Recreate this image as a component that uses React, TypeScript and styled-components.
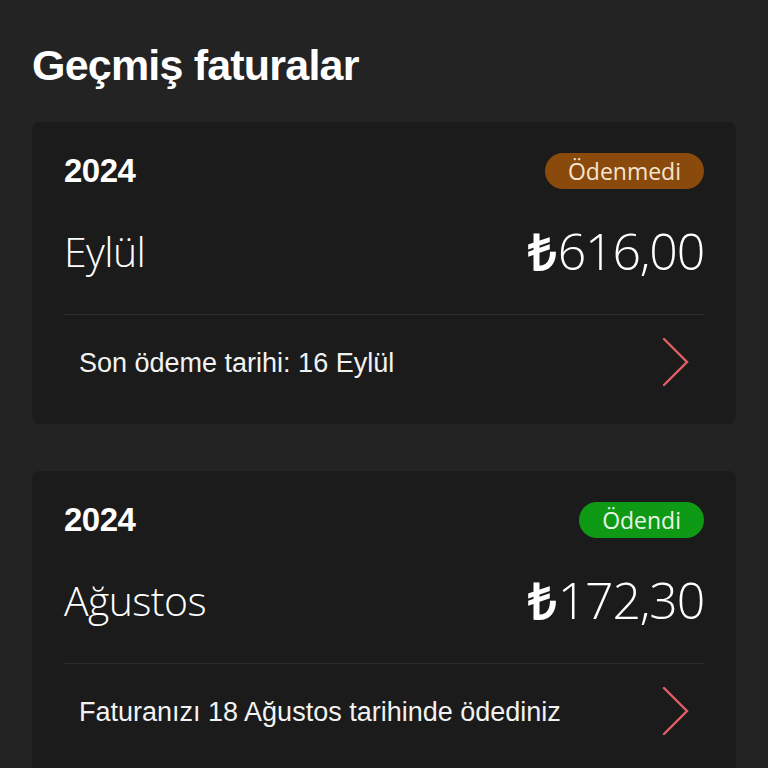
import styled, { createGlobalStyle } from 'styled-components';

const GlobalStyle = createGlobalStyle`
  html, body {
    margin: 0;
    padding: 0;
    background: #232323;
  }
  body {
    font-family: "Liberation Sans", sans-serif;
    color: #ffffff;
  }
`;

const Page = styled.div`
  width: 768px;
  height: 768px;
  overflow: hidden;
  box-sizing: border-box;
  padding: 39px 32px 0;
  background: #232323;
`;

const Title = styled.h1`
  margin: 0 0 31px;
  font-family: "Liberation Sans", sans-serif;
  font-size: 43px;
  font-weight: 700;
  line-height: 52px;
  letter-spacing: -0.8px;
  color: #ffffff;
`;

const List = styled.div`
  display: flex;
  flex-direction: column;
  gap: 47px;
`;

const Card = styled.div`
  background: #1b1b1b;
  border-radius: 8px;
  padding: 31px 32px 0;
`;

const TopRow = styled.div`
  display: flex;
  justify-content: space-between;
  align-items: center;
  height: 36px;
`;

const Year = styled.span`
  font-family: "Liberation Sans", sans-serif;
  font-size: 33px;
  font-weight: 700;
  letter-spacing: -0.5px;
`;

const Badge = styled.span<{ $tone: 'unpaid' | 'paid' }>`
  display: inline-flex;
  align-items: center;
  height: 36px;
  padding: 0 23px;
  border-radius: 18px;
  background: ${({ $tone }) => ($tone === 'paid' ? '#0f9a15' : '#8a4a0b')};
  color: ${({ $tone }) => ($tone === 'paid' ? '#e6f5e6' : '#f4e4d2')};
  font-family: "Open Sans", sans-serif;
  font-size: 23px;
`;

const MainRow = styled.div`
  display: flex;
  justify-content: space-between;
  align-items: center;
  height: 88px;
  margin-top: 18px;
  border-bottom: 1px solid #2e2e2e;
  padding-bottom: 19px;
`;

const Month = styled.span`
  font-family: "Open Sans", sans-serif;
  font-weight: 300;
  font-size: 41px;
  letter-spacing: -0.6px;
`;

const Amount = styled.span`
  font-family: "Open Sans", sans-serif;
  font-weight: 300;
  font-size: 50px;
  letter-spacing: -1.2px;
`;

const Lira = styled.span`
  font-weight: 700;
  margin-right: 2px;
`;

const FooterRow = styled.div`
  display: flex;
  justify-content: space-between;
  align-items: center;
  height: 96px;
  padding: 0 14px 0 15px;
  margin-bottom: 13px;
`;

const Note = styled.span`
  font-size: 27px;
  letter-spacing: 0;
  color: #f2f2f2;
`;

const Chevron = () => (
  <svg width="30" height="50" viewBox="0 0 30 50" fill="none">
    <path d="M4 1 L27 24 L4 47" stroke="#e35f66" strokeWidth="2.4" strokeLinecap="round" strokeLinejoin="miter" />
  </svg>
);

const bills = [
  {
    year: '2024',
    month: 'Eylül',
    amount: '616,00',
    status: 'unpaid' as const,
    label: 'Ödenmedi',
    note: 'Son ödeme tarihi: 16 Eylül',
  },
  {
    year: '2024',
    month: 'Ağustos',
    amount: '172,30',
    status: 'paid' as const,
    label: 'Ödendi',
    note: 'Faturanızı 18 Ağustos tarihinde ödediniz',
  },
];

const App = () => (
  <>
    <GlobalStyle />
    <Page>
      <Title>Geçmiş faturalar</Title>
      <List>
        {bills.map((bill) => (
          <Card key={bill.month}>
            <TopRow>
              <Year>{bill.year}</Year>
              <Badge $tone={bill.status}>{bill.label}</Badge>
            </TopRow>
            <MainRow>
              <Month>{bill.month}</Month>
              <Amount>
                <Lira>₺</Lira>
                {bill.amount}
              </Amount>
            </MainRow>
            <FooterRow>
              <Note>{bill.note}</Note>
              <Chevron />
            </FooterRow>
          </Card>
        ))}
      </List>
    </Page>
  </>
);

export default App;
